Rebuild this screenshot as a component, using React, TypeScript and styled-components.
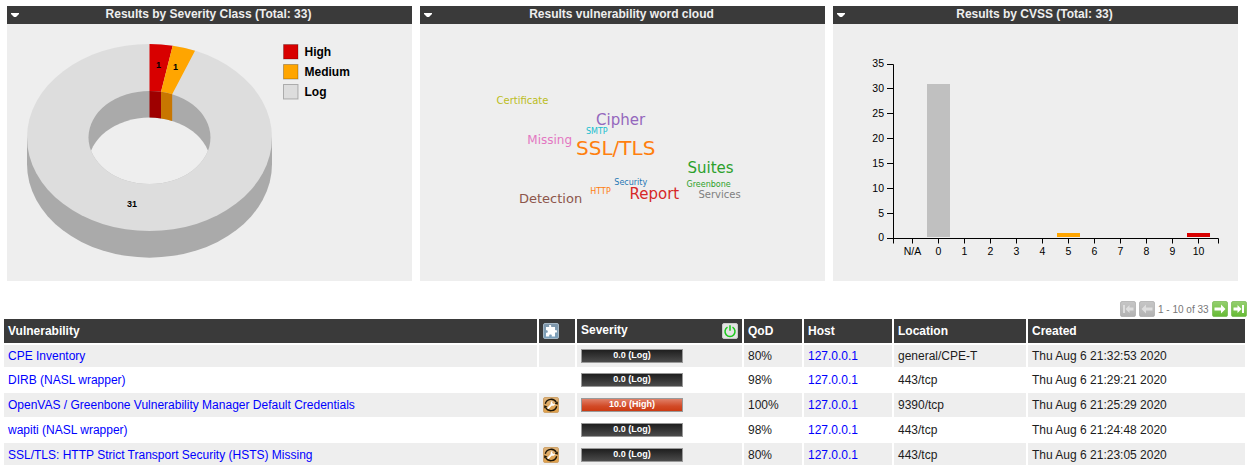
import React from 'react';
import styled, { createGlobalStyle } from 'styled-components';

const GlobalStyle = createGlobalStyle`
  html, body { margin: 0; padding: 0; background: #fff; overflow: hidden; }
  body { font-family: "Liberation Sans", Arial, sans-serif; font-size: 12px; color: #1c1c1c; }
`;

const Page = styled.main`
  width: 1253px;
  height: 465px;
  overflow: hidden;
`;

const Dashboard = styled.section`
  display: flex;
  gap: 8px;
  padding: 6px 7px 0;
`;

const Panel = styled.article`
  width: 405px;
  height: 275px;
  background: #eee;
`;

const PanelHeader = styled.header`
  display: flex;
  align-items: center;
  height: 18px;
  background: #3a3a3a;
  color: #eee;
`;

const PanelTitle = styled.h2`
  flex: 1;
  margin: 0 18px 0 4px;
  padding-bottom: 2px;
  font-size: 12px;
  line-height: 16px;
  font-weight: bold;
  text-align: center;
`;

const MenuArrow = styled.svg`
  display: block;
  width: 8px;
  height: 4px;
  margin: 0 0 0 4px;
  fill: #fff;
`;

const Chart = styled.svg`
  display: block;
  width: 405px;
  height: 257px;
`;

const Pagination = styled.nav`
  display: flex;
  align-items: center;
  justify-content: flex-end;
  gap: 3px;
  height: 16px;
  padding: 20px 6px 0 0;
`;

const PageRange = styled.span`
  width: 51px;
  padding-top: 1px;
  font-size: 10px;
  line-height: 16px;
  white-space: nowrap;
  color: #777;
`;

const Icon = styled.svg`
  display: block;
  width: 16px;
  height: 16px;
  flex: none;
`;

const Table = styled.table`
  width: 1245px;
  margin-left: 2px;
  table-layout: fixed;
  border-collapse: separate;
  border-spacing: 2px;
`;

const Col = styled.col<{ $w: number }>`
  width: ${(p) => p.$w}px;
`;

const HeadCell = styled.th`
  height: 24px;
  padding: 0 4px;
  background: #3a3a3a;
  color: #fff;
  font-size: 12px;
  line-height: 14px;
  font-weight: bold;
  text-align: left;
`;

const HeadSplit = styled.div`
  display: flex;
  justify-content: space-between;
  align-items: center;
`;

const HeadLabel = styled.span`
  padding-bottom: 2px;
`;

const Row = styled.tr<{ $tall?: boolean }>`
  height: ${(p) => (p.$tall ? 24 : 22)}px;
  &:nth-child(odd) td { background: #eee; }
`;

const Cell = styled.td`
  padding: 0 4px;
  line-height: 14px;
  white-space: nowrap;
`;

const Link = styled.a`
  color: #0000ff;
`;

const SeverityBar = styled.div<{ $high?: boolean }>`
  box-sizing: border-box;
  width: 102px;
  height: 14px;
  border: 1px solid #999;
  background: ${(p) =>
    p.$high
      ? 'linear-gradient(#e08068, #d24a26 60%, #cc3a12)'
      : 'linear-gradient(#1f1f1f, #4b4b4b)'};
  color: #fff;
  font-size: 9px;
  line-height: 11px;
  font-weight: bold;
  text-align: center;
`;

const arrowShapes = {
  first: 'M3 4h2v8H3zM5.5 8L9.500 4v2.500H13.500v3H9.500V12z',
  prev: 'M2.500 8L7 3.500v3H13.500v3H7v3z',
  next: 'M13.500 8L9 3.500v3H2.500v3H9v3z',
  last: 'M13 4h-2v8h2zM10.500 8L6.500 4v2.500H2.500v3H6.500V12z',
};

function ArrowIcon({ kind, active }: { kind: keyof typeof arrowShapes; active?: boolean }) {
  const id = 'arrow-' + kind;
  return (
    <Icon viewBox="0 0 16 16">
      <defs>
        <linearGradient id={id} x2="0" y2="1">
          <stop stopColor={active ? '#95cf70' : '#c6c6c6'} />
          <stop offset="1" stopColor={active ? '#66bb33' : '#b2b2b2'} />
        </linearGradient>
      </defs>
      <rect x=".5" y=".5" width="15" height="15" rx="1.5" fill={`url(#${id})`} stroke={active ? '#74b84d' : '#aaa'} strokeOpacity=".7" />
      <path d={arrowShapes[kind]} fill={active ? '#fff' : '#dedede'} />
    </Icon>
  );
}

function PuzzleIcon() {
  return (
    <Icon viewBox="0 0 16 16">
      <defs>
        <linearGradient id="puzzle" x2="0" y2="1">
          <stop stopColor="#8097aa" />
          <stop offset="1" stopColor="#7ba0bb" />
        </linearGradient>
      </defs>
      <rect x=".5" y=".5" width="15" height="15" rx="1.5" fill="url(#puzzle)" stroke="#a5b7c5" />
      <path
        d="M3 4h3c.4 0 .3-.5.1-.8C5.300 1.700 8.700 1.700 8.200 3.200c-.2.400-.2.800.2.800H12v3c0 .4.4.3.8.1 1.600-.5 1.600 3 0 2.500-.4-.2-.8-.3-.8.1V13.500H9c-.4 0-.3-.5-.2-.8.400-1.600-3-1.600-2.600 0 .1.300.2.800-.2.800H3v-3.500c0-.4.3-.3.700-.2 1.500.4 1.500-3 0-2.600-.4.1-.7.2-.7-.2z"
        fill="#fff"
      />
    </Icon>
  );
}

function PowerIcon() {
  return (
    <Icon viewBox="0 0 16 16">
      <rect x=".5" y=".5" width="15" height="15" rx="1.5" fill="#e4e4e4" stroke="#c9c9c9" />
      <path d="M5.500 4.200A5 5 0 1 0 10.500 4.200M8 2.200v5.600" fill="none" stroke="#19c819" strokeWidth="1.500" />
    </Icon>
  );
}

function SolutionIcon() {
  return (
    <Icon viewBox="0 0 16 16">
      <defs>
        <linearGradient id="solution" x2="0" y2="1">
          <stop stopColor="#dcb27c" />
          <stop offset="1" stopColor="#e0a048" />
        </linearGradient>
      </defs>
      <rect x=".5" y=".5" width="15" height="15" rx="1.500" fill="url(#solution)" stroke="#cfa36a" />
      <path d="M2.300 6.800A6 6 0 0 1 13.400 5.500M13.700 9.200A6 6 0 0 1 2.600 10.500" fill="none" stroke="#1a1408" strokeWidth="1.400" />
      <path d="M14.800 4.500v3.200l-3.200-1.200zM1.200 11.500V8.300l3.200 1.200z" fill="#1a1408" />
      <path d="M5.300 11L8.500 7.700" stroke="#fff" strokeWidth="1.800" strokeLinecap="round" />
      <path d="M9.600 4L9.100 5.700l1.200 1.200 1.700-.5c.1 1.900-1.900 2.900-3.500 2C6.900 6.500 7.700 4.200 9.600 4z" fill="#fff" />
    </Icon>
  );
}

const SliceLabel = styled.text`
  font: bold 9px "Liberation Sans", sans-serif;
  text-anchor: middle;
`;

const LegendLabel = styled.text`
  font: bold 12px "Liberation Sans", sans-serif;
`;

const AxisLabel = styled.text<{ $end?: boolean }>`
  font: 10.5px "Liberation Sans", sans-serif;
  text-anchor: ${(p) => (p.$end ? 'end' : 'middle')};
`;

const Word = styled.text<{ $size: number }>`
  font: ${(p) => p.$size}px "DejaVu Sans", sans-serif;
`;

const CX = 142.5;
const CY = 113.5;
const RX = 122.5;
const RY = 93.5;
const IX = 61;
const IY = 46.6;
const DEPTH = 26.7;

function edge(fraction: number, rx: number, ry: number, drop = 0) {
  const a = fraction * Math.PI * 2;
  return `${CX + rx * Math.sin(a)} ${CY - ry * Math.cos(a) + drop}`;
}

function topSlice(from: number, to: number) {
  const large = to - from > 0.5 ? 1 : 0;
  return `M${edge(from, RX, RY)}A${RX} ${RY} 0 ${large} 1 ${edge(to, RX, RY)}L${edge(to, IX, IY)}A${IX} ${IY} 0 ${large} 0 ${edge(from, IX, IY)}Z`;
}

function innerWall(from: number, to: number) {
  return `M${edge(from, IX, IY)}A${IX} ${IY} 0 0 1 ${edge(to, IX, IY)}L${edge(to, IX, IY, DEPTH)}A${IX} ${IY} 0 0 0 ${edge(from, IX, IY, DEPTH)}Z`;
}

const slices = [
  { name: 'High', from: 0, to: 1 / 33, top: '#d80000', wall: '#9e0000' },
  { name: 'Medium', from: 1 / 33, to: 2 / 33, top: '#ffa500', wall: '#c87600' },
  { name: 'Log', from: 2 / 33, to: 1, top: '#ddd', wall: '#aaa' },
];

function SeverityDonut() {
  return (
    <Chart viewBox="0 0 405 257">
      <defs>
        <clipPath id="hole">
          <ellipse cx={CX} cy={CY} rx={IX} ry={IY} />
        </clipPath>
      </defs>
      <path d={`M${CX - RX} ${CY}v${DEPTH}a${RX} ${RY} 0 0 0 ${RX * 2} 0v${-DEPTH}z`} fill="#aaa" />
      <ellipse cx={CX} cy={CY} rx={RX} ry={RY} fill="#ddd" />
      <ellipse cx={CX} cy={CY} rx={IX} ry={IY} fill="#aaa" />
      <g clipPath="url(#hole)">
        <ellipse cx={CX} cy={CY + DEPTH} rx={IX} ry={IY} fill="#eee" />
      </g>
      {slices.slice(0, 2).map((s) => (
        <g key={s.name}>
          <path d={topSlice(s.from, s.to)} fill={s.top} />
          <path d={innerWall(s.from, s.to)} fill={s.wall} />
        </g>
      ))}
      <SliceLabel x="151.500" y="44">1</SliceLabel>
      <SliceLabel x="168.500" y="46">1</SliceLabel>
      <SliceLabel x="125" y="183">31</SliceLabel>
      {slices.map((s, i) => (
        <g key={s.name}>
          <rect x="276.500" y={20.5 + i * 20} width="14.500" height="14.500" fill={s.top} stroke="#000" strokeOpacity=".25" />
          <LegendLabel x="297.500" y={32 + i * 20}>{s.name}</LegendLabel>
        </g>
      ))}
    </Chart>
  );
}

const words: [string, number, number, number, string][] = [
  ['Certificate', 76.5, 80, 10, '#bcbd22'],
  ['Cipher', 176, 101, 15, '#9467bd'],
  ['SMTP', 166, 110, 8, '#17becf'],
  ['Missing', 107.3, 120, 12, '#e377c2'],
  ['SSL/TLS', 156, 131, 20, '#ff7f0e'],
  ['Suites', 267.5, 149, 15, '#2ca02c'],
  ['Security', 194.300, 161, 8, '#1f77b4'],
  ['Greenbone', 266.5, 163, 8, '#2ca02c'],
  ['HTTP', 170.300, 170, 8, '#ff7f0e'],
  ['Report', 209.5, 175, 15, '#d62728'],
  ['Services', 278.5, 174, 10, '#7f7f7f'],
  ['Detection', 99, 179, 13, '#8c564b'],
];

function WordCloud() {
  return (
    <Chart viewBox="0 0 405 257">
      {words.map(([text, x, y, size, color]) => (
        <Word key={text} x={x} y={y} $size={size} fill={color}>{text}</Word>
      ))}
    </Chart>
  );
}

const yTicks: [number, number][] = [
  [35, 40.5], [30, 64.5], [25, 89.5], [20, 114.5], [15, 139.5], [10, 164.5], [5, 189.5], [0, 214.5],
];
const xTicks = ['N/A', '0', '1', '2', '3', '4', '5', '6', '7', '8', '9', '10'];

function CvssChart() {
  return (
    <Chart viewBox="0 0 405 257">
      <rect x="94" y="60" width="23" height="153" fill="#c0c0c0" />
      <rect x="224" y="209" width="23" height="4" fill="#ffa500" />
      <rect x="354" y="209" width="23" height="4" fill="#d80000" />
      <path d="M54 40.500H60.500V219.500M54 214.500H385.500V219.500" fill="none" stroke="#000" />
      {yTicks.map(([value, y]) => (
        <g key={value}>
          <path d={`M54 ${y}h6`} stroke="#000" />
          <AxisLabel $end x="51" y={value === 0 || value === 35 ? y + 2.5 : y + 3.5}>{value}</AxisLabel>
        </g>
      ))}
      {xTicks.map((label, i) => (
        <g key={label}>
          <path d={`M${79.5 + i * 26} 214.500v5`} stroke="#000" />
          <AxisLabel x={79.5 + i * 26} y="231">{label}</AxisLabel>
        </g>
      ))}
    </Chart>
  );
}

function ChartPanel({ title, children }: { title: string; children: React.ReactNode }) {
  return (
    <Panel>
      <PanelHeader>
        <MenuArrow viewBox="0 0 8 4"><path d="M0 0h8v1L5 4H3L0 1z" /></MenuArrow>
        <PanelTitle>{title}</PanelTitle>
      </PanelHeader>
      {children}
    </Panel>
  );
}

const results = [
  { name: 'CPE Inventory', fix: false, high: false, qod: '80%', location: 'general/CPE-T', time: '21:32:53' },
  { name: 'DIRB (NASL wrapper)', fix: false, high: false, qod: '98%', location: '443/tcp', time: '21:29:21' },
  { name: 'OpenVAS / Greenbone Vulnerability Manager Default Credentials', fix: true, high: true, qod: '100%', location: '9390/tcp', time: '21:25:29' },
  { name: 'wapiti (NASL wrapper)', fix: false, high: false, qod: '98%', location: '443/tcp', time: '21:24:48' },
  { name: 'SSL/TLS: HTTP Strict Transport Security (HSTS) Missing', fix: true, high: false, qod: '80%', location: '443/tcp', time: '21:23:05' },
];

const columnWidths = [533, 36, 165, 58, 88, 132, 217];

export default function App() {
  return (
    <Page>
      <GlobalStyle />
      <Dashboard>
        <ChartPanel title="Results by Severity Class (Total: 33)"><SeverityDonut /></ChartPanel>
        <ChartPanel title="Results vulnerability word cloud"><WordCloud /></ChartPanel>
        <ChartPanel title="Results by CVSS (Total: 33)"><CvssChart /></ChartPanel>
      </Dashboard>
      <Pagination>
        <ArrowIcon kind="first" />
        <ArrowIcon kind="prev" />
        <PageRange>1 - 10 of 33</PageRange>
        <ArrowIcon kind="next" active />
        <ArrowIcon kind="last" active />
      </Pagination>
      <Table>
        <colgroup>
          {columnWidths.map((w) => <Col key={w} $w={w} />)}
        </colgroup>
        <thead>
          <tr>
            <HeadCell>Vulnerability</HeadCell>
            <HeadCell><PuzzleIcon /></HeadCell>
            <HeadCell><HeadSplit><HeadLabel>Severity</HeadLabel><PowerIcon /></HeadSplit></HeadCell>
            <HeadCell>QoD</HeadCell>
            <HeadCell>Host</HeadCell>
            <HeadCell>Location</HeadCell>
            <HeadCell>Created</HeadCell>
          </tr>
        </thead>
        <tbody>
          {results.map((r) => (
            <Row key={r.name} $tall={r.fix}>
              <Cell><Link>{r.name}</Link></Cell>
              <Cell>{r.fix && <SolutionIcon />}</Cell>
              <Cell><SeverityBar $high={r.high}>{r.high ? '10.0 (High)' : '0.0 (Log)'}</SeverityBar></Cell>
              <Cell>{r.qod}</Cell>
              <Cell><Link>127.0.0.1</Link></Cell>
              <Cell>{r.location}</Cell>
              <Cell>Thu Aug 6 {r.time} 2020</Cell>
            </Row>
          ))}
        </tbody>
      </Table>
    </Page>
  );
}
